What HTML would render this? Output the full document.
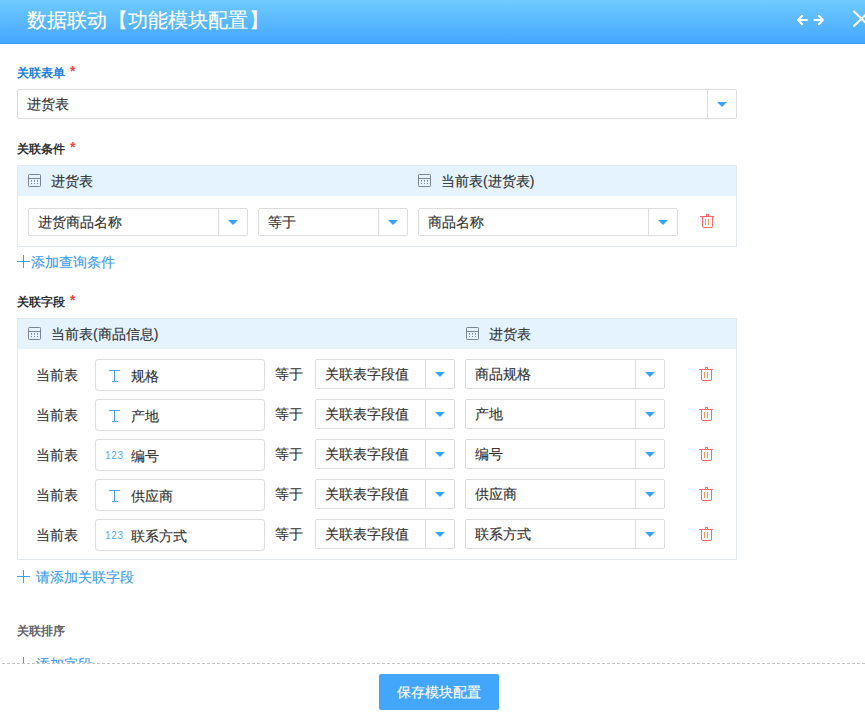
<!DOCTYPE html>
<html><head><meta charset="utf-8">
<style>
*{box-sizing:border-box;margin:0;padding:0}
html,body{width:865px;height:714px;overflow:hidden;background:#fff;font-family:"Liberation Sans",sans-serif;color:#333}
.sel .tx,.ht,.rl,.fin .tx,#btn,#title,.link{-webkit-text-stroke:0.15px currentColor}
.a{position:absolute}
#hd{left:0;top:0;width:865px;height:44px;background:linear-gradient(#6fcbff,#45a6fd);border-bottom:1px solid #36a0fa}
#hdl{left:0;top:44px;width:865px;height:1px;background:#fffaf2}
#title{left:27px;top:5px;font-size:20px;line-height:30px;color:#fff;white-space:nowrap;letter-spacing:0.15px}
.lbl{font-size:12px;line-height:16px;font-weight:bold;white-space:nowrap}
.star{color:#e8473d;margin-left:5px;font-size:14px;position:relative;top:-1px}
.sel{border:1px solid #dcdcdc;border-radius:2px;background:#fff}
.sel .tx{position:absolute;top:0;font-size:14px;white-space:nowrap;color:#333}
.sel .dv{position:absolute;top:0;bottom:0;border-left:1px solid #dcdcdc}
.tri{position:absolute;width:0;height:0;border-left:5px solid transparent;border-right:5px solid transparent;border-top:5px solid #3ba2fc}
.tbl{border:1px solid #e4e8f1;background:#fff}
.th{position:absolute;left:0;right:0;top:0;background:#e4f3fe}
.ht{position:absolute;font-size:14px;line-height:20px;white-space:nowrap;color:#333}
.link{color:#3c9ef4;font-size:14px;line-height:20px;white-space:nowrap}
.fin{border:1px solid #dcdcdc;border-radius:3px;background:#fff}
.fin .tx{position:absolute;left:35px;top:0;font-size:14px;line-height:30px;white-space:nowrap;color:#333}
.rl{font-size:14px;line-height:20px;white-space:nowrap;color:#333}
.num{font-size:10px;line-height:12px;color:#5aa9f3;letter-spacing:0.7px}
#ft{left:-3px;top:663px;width:873px;height:51px;background:#fff;border-top:1px dashed #c4c4c4}
#btn{left:379px;top:674px;width:120px;height:36px;background:#42a7fb;border-radius:2px;color:#fff;font-size:14px;line-height:36px;text-align:center}
</style></head><body>
<div class="a" id="hd"></div><div class="a" id="hdl"></div>
<div class="a" id="title">数据联动【功能模块配置】</div>
<svg class="a" style="left:796px;top:13px" width="30" height="14" viewBox="0 0 30 14"><g fill="none" stroke="#fff" stroke-width="2" stroke-linecap="round" stroke-linejoin="round"><path d="M2 7H11M6.2 2.8L2 7L6.2 11.2"/><path d="M18.5 7H27M22.8 2.8L27 7L22.8 11.2"/></g></svg>
<svg class="a" style="left:852px;top:10px" width="20" height="18" viewBox="0 0 20 18"><g fill="none" stroke="#fff" stroke-width="2" stroke-linecap="round"><path d="M2 1.5L17 16M17 1.5L2 16"/></g></svg>

<div class="a lbl" style="left:17px;top:64px;color:#2280e0">关联表单<span class="star">*</span></div>
<div class="a sel" style="left:17px;top:89px;width:720px;height:30px"><div class="tx" style="left:9px;line-height:28px">进货表</div><div class="dv" style="right:28px"></div><div class="tri" style="right:9px;top:12px"></div></div>
<div class="a lbl" style="left:17px;top:140px;color:#333">关联条件<span class="star">*</span></div>
<div class="a tbl" style="left:17px;top:165px;width:720px;height:82px"><div class="th" style="height:30px"></div></div>
<svg class="a" style="left:28px;top:174px" width="14" height="14" viewBox="0 0 14 14"><g fill="none" stroke="#7a8494" stroke-width="1"><rect x="0.5" y="0.5" width="12" height="12" rx="0.8"/><path d="M0.5 4.5H12.5" shape-rendering="crispEdges"/></g><g fill="#7a8494"><rect x="3" y="6" width="1" height="1.6"/><rect x="6" y="6" width="1" height="1.6"/><rect x="9" y="6" width="1" height="1.6"/><rect x="3" y="9" width="1" height="1"/><rect x="6" y="9" width="1" height="1"/><rect x="9" y="9" width="1" height="1"/></g></svg>
<div class="a ht" style="left:51px;top:171px">进货表</div>
<svg class="a" style="left:418px;top:174px" width="14" height="14" viewBox="0 0 14 14"><g fill="none" stroke="#7a8494" stroke-width="1"><rect x="0.5" y="0.5" width="12" height="12" rx="0.8"/><path d="M0.5 4.5H12.5" shape-rendering="crispEdges"/></g><g fill="#7a8494"><rect x="3" y="6" width="1" height="1.6"/><rect x="6" y="6" width="1" height="1.6"/><rect x="9" y="6" width="1" height="1.6"/><rect x="3" y="9" width="1" height="1"/><rect x="6" y="9" width="1" height="1"/><rect x="9" y="9" width="1" height="1"/></g></svg>
<div class="a ht" style="left:441px;top:171px">当前表(进货表)</div>
<div class="a sel" style="left:28px;top:208px;width:220px;height:28px"><div class="tx" style="left:9px;line-height:26px">进货商品名称</div><div class="dv" style="right:28px"></div><div class="tri" style="right:9px;top:11px"></div></div>
<div class="a sel" style="left:258px;top:208px;width:150px;height:28px"><div class="tx" style="left:9px;line-height:26px">等于</div><div class="dv" style="right:28px"></div><div class="tri" style="right:9px;top:11px"></div></div>
<div class="a sel" style="left:418px;top:208px;width:260px;height:28px"><div class="tx" style="left:9px;line-height:26px">商品名称</div><div class="dv" style="right:28px"></div><div class="tri" style="right:9px;top:11px"></div></div>
<svg class="a" style="left:700px;top:214px" width="16" height="15" viewBox="0 0 16 15"><g fill="none" stroke="#fd6663" stroke-width="1"><path d="M0 2.5H14" shape-rendering="crispEdges"/><path d="M6.5 2.5V0.5H8.5V2.5" shape-rendering="crispEdges"/><path d="M2.5 2.5V12Q2.5 13.5 4 13.5H11Q12.5 13.5 12.5 12V2.5"/><path d="M5.5 5V11M8.5 5V11" stroke="#f7985c" shape-rendering="crispEdges"/></g></svg>
<svg class="a" style="left:17px;top:255px" width="13" height="13" viewBox="0 0 13 13" shape-rendering="crispEdges"><path d="M6 0H7V13H6ZM0 6H13V7H0Z" fill="#3ea0f5"/></svg>
<div class="a link" style="left:31px;top:252px">添加查询条件</div>
<div class="a lbl" style="left:17px;top:293px;color:#333">关联字段<span class="star">*</span></div>
<div class="a tbl" style="left:17px;top:318px;width:720px;height:242px"><div class="th" style="height:30px"></div></div>
<svg class="a" style="left:28px;top:327px" width="14" height="14" viewBox="0 0 14 14"><g fill="none" stroke="#7a8494" stroke-width="1"><rect x="0.5" y="0.5" width="12" height="12" rx="0.8"/><path d="M0.5 4.5H12.5" shape-rendering="crispEdges"/></g><g fill="#7a8494"><rect x="3" y="6" width="1" height="1.6"/><rect x="6" y="6" width="1" height="1.6"/><rect x="9" y="6" width="1" height="1.6"/><rect x="3" y="9" width="1" height="1"/><rect x="6" y="9" width="1" height="1"/><rect x="9" y="9" width="1" height="1"/></g></svg>
<div class="a ht" style="left:51px;top:324px">当前表(商品信息)</div>
<svg class="a" style="left:466px;top:327px" width="14" height="14" viewBox="0 0 14 14"><g fill="none" stroke="#7a8494" stroke-width="1"><rect x="0.5" y="0.5" width="12" height="12" rx="0.8"/><path d="M0.5 4.5H12.5" shape-rendering="crispEdges"/></g><g fill="#7a8494"><rect x="3" y="6" width="1" height="1.6"/><rect x="6" y="6" width="1" height="1.6"/><rect x="9" y="6" width="1" height="1.6"/><rect x="3" y="9" width="1" height="1"/><rect x="6" y="9" width="1" height="1"/><rect x="9" y="9" width="1" height="1"/></g></svg>
<div class="a ht" style="left:489px;top:324px">进货表</div>
<div class="a rl" style="left:36px;top:365px">当前表</div>
<div class="a fin" style="left:95px;top:359px;width:170px;height:32px"><div class="tx" style="top:1px">规格</div></div>
<svg class="a" style="left:109px;top:370px" width="11" height="13" viewBox="0 0 11 13"><g fill="none" stroke="#4aa4f4" stroke-width="1" shape-rendering="crispEdges"><path d="M0 0.5H11M5.5 0.5V11.5M3 11.5H9"/></g></svg>
<div class="a rl" style="left:275px;top:364px">等于</div>
<div class="a sel" style="left:315px;top:359px;width:140px;height:30px"><div class="tx" style="left:9px;line-height:28px">关联表字段值</div><div class="dv" style="right:28px"></div><div class="tri" style="right:9px;top:12px"></div></div>
<div class="a sel" style="left:465px;top:359px;width:200px;height:30px"><div class="tx" style="left:9px;line-height:28px">商品规格</div><div class="dv" style="right:28px"></div><div class="tri" style="right:9px;top:12px"></div></div>
<svg class="a" style="left:699px;top:367px" width="16" height="15" viewBox="0 0 16 15"><g fill="none" stroke="#fd6663" stroke-width="1"><path d="M0 2.5H14" shape-rendering="crispEdges"/><path d="M6.5 2.5V0.5H8.5V2.5" shape-rendering="crispEdges"/><path d="M2.5 2.5V12Q2.5 13.5 4 13.5H11Q12.5 13.5 12.5 12V2.5"/><path d="M5.5 5V11M8.5 5V11" stroke="#f7985c" shape-rendering="crispEdges"/></g></svg>
<div class="a rl" style="left:36px;top:405px">当前表</div>
<div class="a fin" style="left:95px;top:399px;width:170px;height:32px"><div class="tx" style="top:1px">产地</div></div>
<svg class="a" style="left:109px;top:410px" width="11" height="13" viewBox="0 0 11 13"><g fill="none" stroke="#4aa4f4" stroke-width="1" shape-rendering="crispEdges"><path d="M0 0.5H11M5.5 0.5V11.5M3 11.5H9"/></g></svg>
<div class="a rl" style="left:275px;top:404px">等于</div>
<div class="a sel" style="left:315px;top:399px;width:140px;height:30px"><div class="tx" style="left:9px;line-height:28px">关联表字段值</div><div class="dv" style="right:28px"></div><div class="tri" style="right:9px;top:12px"></div></div>
<div class="a sel" style="left:465px;top:399px;width:200px;height:30px"><div class="tx" style="left:9px;line-height:28px">产地</div><div class="dv" style="right:28px"></div><div class="tri" style="right:9px;top:12px"></div></div>
<svg class="a" style="left:699px;top:407px" width="16" height="15" viewBox="0 0 16 15"><g fill="none" stroke="#fd6663" stroke-width="1"><path d="M0 2.5H14" shape-rendering="crispEdges"/><path d="M6.5 2.5V0.5H8.5V2.5" shape-rendering="crispEdges"/><path d="M2.5 2.5V12Q2.5 13.5 4 13.5H11Q12.5 13.5 12.5 12V2.5"/><path d="M5.5 5V11M8.5 5V11" stroke="#f7985c" shape-rendering="crispEdges"/></g></svg>
<div class="a rl" style="left:36px;top:445px">当前表</div>
<div class="a fin" style="left:95px;top:439px;width:170px;height:32px"><div class="tx" style="top:1px">编号</div></div>
<div class="a num" style="left:105px;top:450px">123</div>
<div class="a rl" style="left:275px;top:444px">等于</div>
<div class="a sel" style="left:315px;top:439px;width:140px;height:30px"><div class="tx" style="left:9px;line-height:28px">关联表字段值</div><div class="dv" style="right:28px"></div><div class="tri" style="right:9px;top:12px"></div></div>
<div class="a sel" style="left:465px;top:439px;width:200px;height:30px"><div class="tx" style="left:9px;line-height:28px">编号</div><div class="dv" style="right:28px"></div><div class="tri" style="right:9px;top:12px"></div></div>
<svg class="a" style="left:699px;top:447px" width="16" height="15" viewBox="0 0 16 15"><g fill="none" stroke="#fd6663" stroke-width="1"><path d="M0 2.5H14" shape-rendering="crispEdges"/><path d="M6.5 2.5V0.5H8.5V2.5" shape-rendering="crispEdges"/><path d="M2.5 2.5V12Q2.5 13.5 4 13.5H11Q12.5 13.5 12.5 12V2.5"/><path d="M5.5 5V11M8.5 5V11" stroke="#f7985c" shape-rendering="crispEdges"/></g></svg>
<div class="a rl" style="left:36px;top:485px">当前表</div>
<div class="a fin" style="left:95px;top:479px;width:170px;height:32px"><div class="tx" style="top:1px">供应商</div></div>
<svg class="a" style="left:109px;top:490px" width="11" height="13" viewBox="0 0 11 13"><g fill="none" stroke="#4aa4f4" stroke-width="1" shape-rendering="crispEdges"><path d="M0 0.5H11M5.5 0.5V11.5M3 11.5H9"/></g></svg>
<div class="a rl" style="left:275px;top:484px">等于</div>
<div class="a sel" style="left:315px;top:479px;width:140px;height:30px"><div class="tx" style="left:9px;line-height:28px">关联表字段值</div><div class="dv" style="right:28px"></div><div class="tri" style="right:9px;top:12px"></div></div>
<div class="a sel" style="left:465px;top:479px;width:200px;height:30px"><div class="tx" style="left:9px;line-height:28px">供应商</div><div class="dv" style="right:28px"></div><div class="tri" style="right:9px;top:12px"></div></div>
<svg class="a" style="left:699px;top:487px" width="16" height="15" viewBox="0 0 16 15"><g fill="none" stroke="#fd6663" stroke-width="1"><path d="M0 2.5H14" shape-rendering="crispEdges"/><path d="M6.5 2.5V0.5H8.5V2.5" shape-rendering="crispEdges"/><path d="M2.5 2.5V12Q2.5 13.5 4 13.5H11Q12.5 13.5 12.5 12V2.5"/><path d="M5.5 5V11M8.5 5V11" stroke="#f7985c" shape-rendering="crispEdges"/></g></svg>
<div class="a rl" style="left:36px;top:525px">当前表</div>
<div class="a fin" style="left:95px;top:519px;width:170px;height:32px"><div class="tx" style="top:1px">联系方式</div></div>
<div class="a num" style="left:105px;top:530px">123</div>
<div class="a rl" style="left:275px;top:524px">等于</div>
<div class="a sel" style="left:315px;top:519px;width:140px;height:30px"><div class="tx" style="left:9px;line-height:28px">关联表字段值</div><div class="dv" style="right:28px"></div><div class="tri" style="right:9px;top:12px"></div></div>
<div class="a sel" style="left:465px;top:519px;width:200px;height:30px"><div class="tx" style="left:9px;line-height:28px">联系方式</div><div class="dv" style="right:28px"></div><div class="tri" style="right:9px;top:12px"></div></div>
<svg class="a" style="left:699px;top:527px" width="16" height="15" viewBox="0 0 16 15"><g fill="none" stroke="#fd6663" stroke-width="1"><path d="M0 2.5H14" shape-rendering="crispEdges"/><path d="M6.5 2.5V0.5H8.5V2.5" shape-rendering="crispEdges"/><path d="M2.5 2.5V12Q2.5 13.5 4 13.5H11Q12.5 13.5 12.5 12V2.5"/><path d="M5.5 5V11M8.5 5V11" stroke="#f7985c" shape-rendering="crispEdges"/></g></svg>
<svg class="a" style="left:17px;top:570px" width="13" height="13" viewBox="0 0 13 13" shape-rendering="crispEdges"><path d="M6 0H7V13H6ZM0 6H13V7H0Z" fill="#3ea0f5"/></svg>
<div class="a link" style="left:36px;top:567px">请添加关联字段</div>
<div class="a lbl" style="left:17px;top:623px;color:#666">关联排序</div>
<svg class="a" style="left:17px;top:657px" width="13" height="13" viewBox="0 0 13 13" shape-rendering="crispEdges"><path d="M6 0H7V13H6ZM0 6H13V7H0Z" fill="#3ea0f5"/></svg>
<div class="a link" style="left:36px;top:654px">添加字段</div>
<div class="a" id="ft"></div>
<div class="a" id="btn">保存模块配置</div>
</body></html>
